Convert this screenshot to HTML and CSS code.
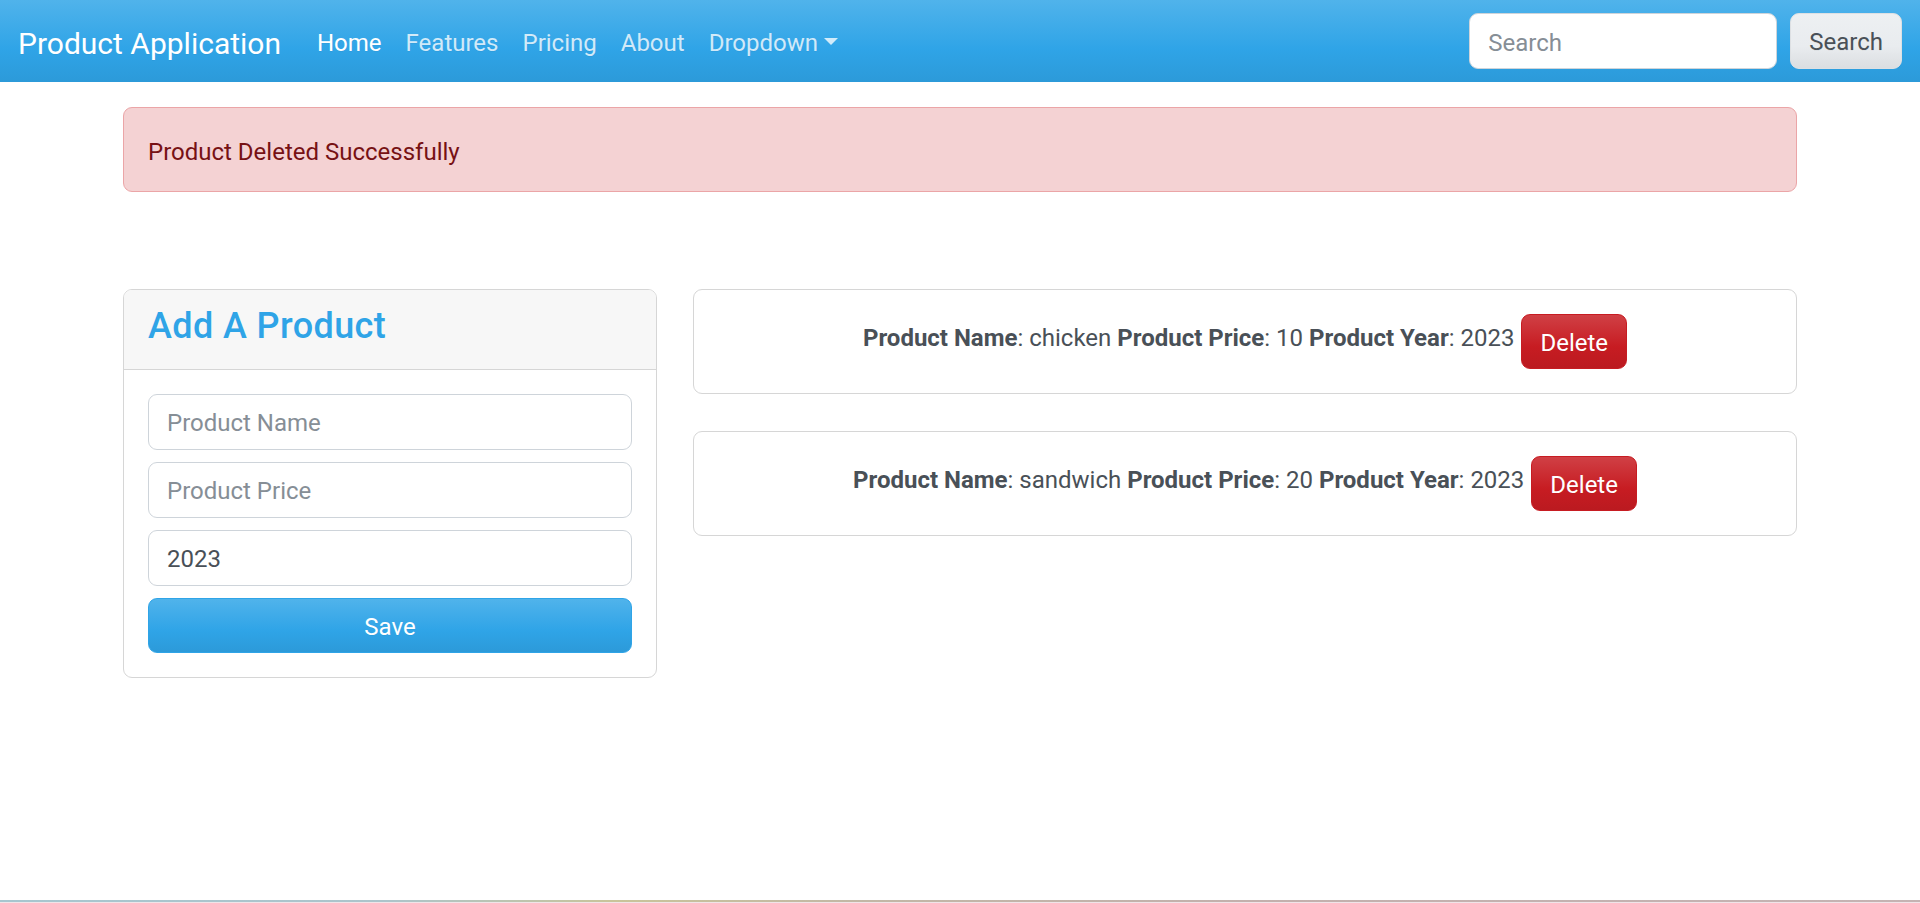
FILE: index.html
```html
<!DOCTYPE html>
<html lang="en">
<head>
<meta charset="utf-8">
<title>Product Application</title>
<link rel="stylesheet" href="styles.css">
</head>
<body>
<nav class="navbar">
  <div class="navbar-inner">
    <a class="brand" href="#">Product Application</a>
    <ul class="nav">
      <li><a class="nav-link active" href="#">Home</a></li>
      <li><a class="nav-link" href="#">Features</a></li>
      <li><a class="nav-link" href="#">Pricing</a></li>
      <li><a class="nav-link" href="#">About</a></li>
      <li><a class="nav-link dropdown-toggle" href="#">Dropdown</a></li>
    </ul>
    <form class="search">
      <input class="search-input" type="search" placeholder="Search">
      <button class="btn btn-secondary btn-search" type="button">Search</button>
    </form>
  </div>
</nav>
<main class="container">
  <div class="alert">Product Deleted Successfully</div>
  <div class="row">
    <section class="card add-card">
      <div class="card-header"><h4 class="card-title">Add A Product</h4></div>
      <div class="card-body">
        <input class="form-control" type="text" placeholder="Product Name">
        <input class="form-control" type="text" placeholder="Product Price">
        <input class="form-control" type="text" value="2023">
        <button class="btn btn-primary btn-block" type="button">Save</button>
      </div>
    </section>
    <section class="list">
      <div class="card item">
        <div class="card-body item-body"><span class="item-text"><b>Product Name</b>: chicken <b>Product Price</b>: 10 <b>Product Year</b>: 2023</span><button class="btn btn-danger" type="button">Delete</button></div>
      </div>
      <div class="card item">
        <div class="card-body item-body"><span class="item-text"><b>Product Name</b>: sandwich <b>Product Price</b>: 20 <b>Product Year</b>: 2023</span><button class="btn btn-danger" type="button">Delete</button></div>
      </div>
    </section>
  </div>
</main>
<div class="window-edge"></div>
</body>
</html>
```
FILE: styles.css
```css
html, body {
  height: 100%;
}
body {
  margin: 0;
  font-family: Roboto, "Segoe UI", "Liberation Sans", sans-serif;
  font-size: 24px;
  line-height: 1.5;
  color: #495057;
  background: #fff;
}

/* Navbar */
.navbar {
  background-image: linear-gradient(rgb(80, 179, 235), #2fa4e7 60%, rgb(44, 154, 217));
  padding: 13px 0;
}
.navbar-inner {
  display: flex;
  align-items: center;
  height: 56px;
  padding: 0 18px;
}
.brand {
  font-size: 30px;
  line-height: 1.5;
  padding: 6px 0 2px;
  margin-right: 24px;
  color: #fff;
  text-decoration: none;
  text-shadow: 0 1px 0 rgba(0, 0, 0, 0.05);
}
.nav {
  display: flex;
  flex: 1;
  list-style: none;
  margin: 0;
  padding: 0;
}
.nav-link {
  display: block;
  padding: 10px 12px 6px;
  color: rgba(255, 255, 255, 0.78);
  text-decoration: none;
  text-shadow: 0 1px 0 rgba(0, 0, 0, 0.05);
}
.nav-link.active {
  color: #fff;
}
.dropdown-toggle::after {
  content: "";
  display: inline-block;
  margin-left: 0.255em;
  vertical-align: 0.255em;
  border-top: 0.3em solid;
  border-right: 0.3em solid transparent;
  border-left: 0.3em solid transparent;
  border-bottom: 0;
}
.search {
  display: flex;
  gap: 13px;
  margin: 0;
}
.search-input {
  width: 308px;
  height: 56px;
  box-sizing: border-box;
  padding: 11px 18px 7px;
  font: inherit;
  color: #495057;
  background: #fff;
  border: 1px solid #ced4da;
  border-radius: 9px;
  outline: none;
}
.search-input::placeholder,
.form-control::placeholder {
  color: #868e96;
}

/* Buttons */
.btn {
  display: inline-block;
  box-sizing: border-box;
  height: 55px;
  font-family: inherit;
  font-size: 24px;
  line-height: 1.5;
  padding: 10px 18px 7px;
  border: 1px solid transparent;
  border-radius: 9px;
  text-align: center;
  cursor: pointer;
  text-shadow: 0 1px 0 rgba(0, 0, 0, 0.05);
}
.btn-search {
  height: 56px;
  padding: 10px 18px 8px;
}
.btn-secondary {
  color: #495057;
  background-image: linear-gradient(rgb(237, 240, 242), #e9ecef 60%, rgb(219, 222, 225));
  border-color: #dde0e3;
}
.btn-primary {
  color: #fff;
  background-image: linear-gradient(rgb(80, 179, 235), #2fa4e7 60%, rgb(44, 154, 217));
  border-color: #2fa4e7;
}
.btn-danger {
  color: #fff;
  background-image: linear-gradient(rgb(208, 64, 69), #c71c22 60%, rgb(187, 26, 32));
  border-color: #c71c22;
}
.btn-block {
  display: block;
  width: 100%;
}

/* Layout */
.container {
  width: 1674px;
  margin: 0 auto;
  padding-top: 25px;
}
.alert {
  box-sizing: border-box;
  height: 85px;
  padding: 5px 24px 0;
  display: flex;
  align-items: center;
  color: #771114;
  background: #f4d2d3;
  border: 1px solid #eba5a7;
  border-radius: 9px;
  margin-bottom: 97px;
}
.row {
  display: grid;
  grid-template-columns: 534px 1104px;
  column-gap: 36px;
  align-items: start;
}

/* Cards */
.card {
  background: #fff;
  border: 1px solid #d6d6d6;
  border-radius: 9px;
  overflow: hidden;
}
.card-header {
  padding: 15px 24px 9px;
  background: #f7f7f7;
  border-bottom: 1px solid #d6d6d6;
}
.card-title {
  margin: 0 0 12px;
  font-size: 36px;
  font-weight: 500;
  line-height: 1.2;
  letter-spacing: 0.4px;
  color: #2fa4e7;
}
.card-body {
  padding: 24px;
}
.add-card .card-body {
  display: flex;
  flex-direction: column;
  gap: 12px;
}
.form-control {
  display: block;
  width: 100%;
  height: 56px;
  box-sizing: border-box;
  padding: 10px 18px 8px;
  font: inherit;
  color: #495057;
  background: #fff;
  border: 1px solid #ced4da;
  border-radius: 9px;
  outline: none;
}
.list {
  display: flex;
  flex-direction: column;
  gap: 37px;
}
.item-body {
  display: flex;
  justify-content: center;
  align-items: center;
  gap: 7px;
  height: 55px;
  box-sizing: content-box;
}
.item-text {
  margin-bottom: 7px;
}
.item-text b {
  font-weight: 700;
}

/* Bottom window edge */
.window-edge {
  position: fixed;
  left: 0;
  right: 0;
  bottom: 0;
  height: 3px;
  background: linear-gradient(to right, #a7c6cf 0%, #acc4cb 20%, #c9c49a 32%, #c2b7a6 45%, #c3b0ad 65%, #c5b3b3 100%);
  border-bottom: 1px solid #f0e4e8;
  box-sizing: border-box;
}
```
